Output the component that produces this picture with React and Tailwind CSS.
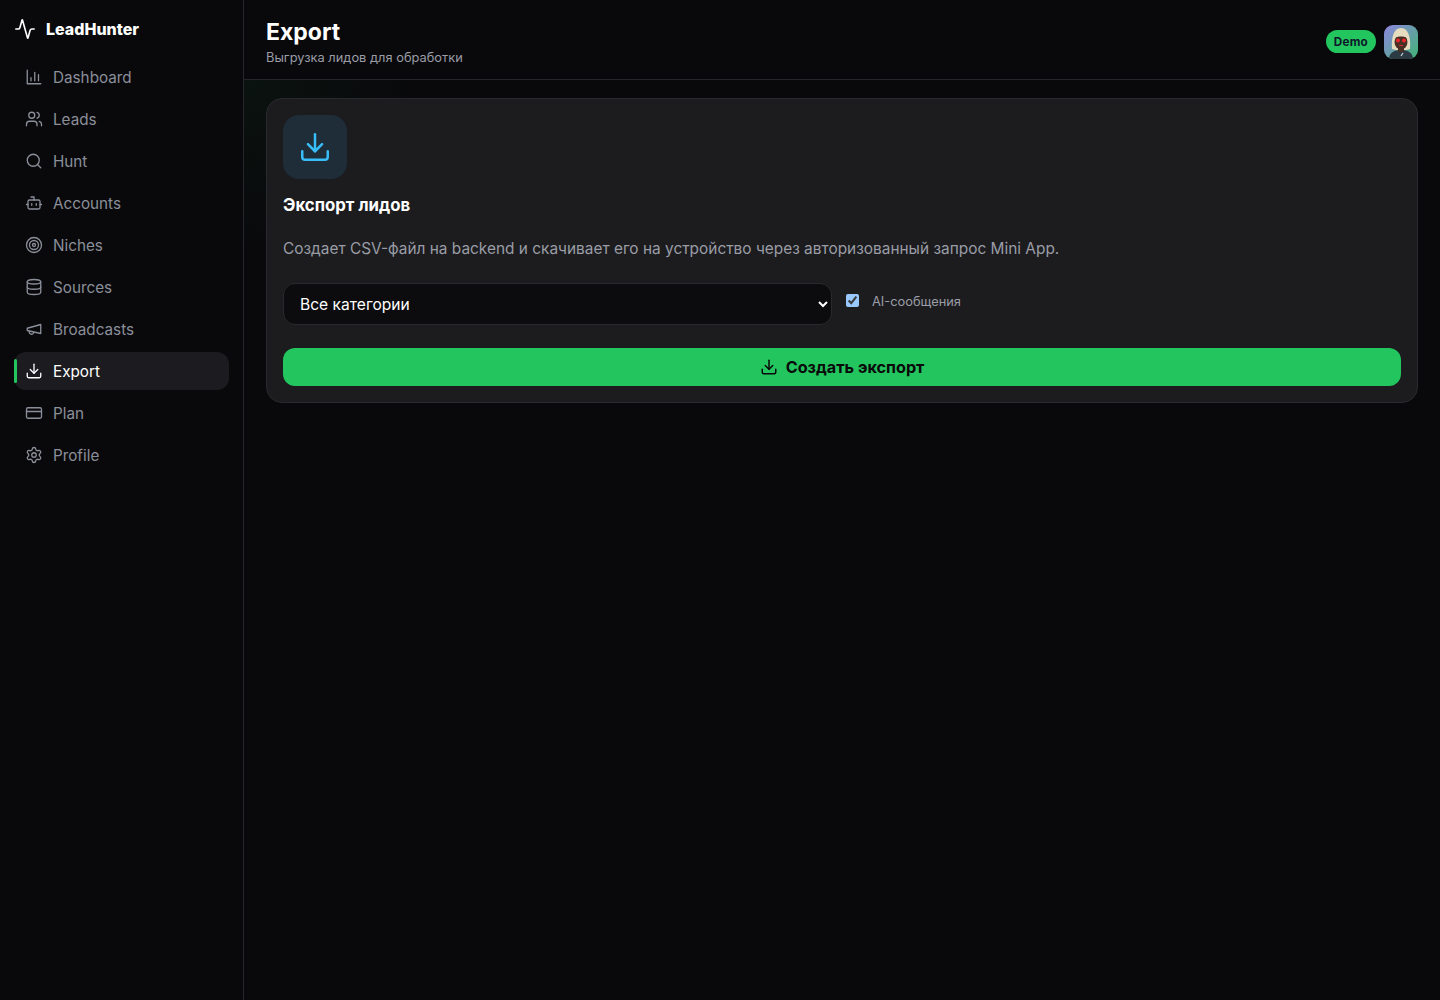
import { Activity, Users, Search, Bot, Target, Database, Download, CreditCard, Settings } from 'lucide-react';

const navItems = [
  { label: 'Dashboard', icon: ChartIcon },
  { label: 'Leads', icon: Users },
  { label: 'Hunt', icon: Search },
  { label: 'Accounts', icon: Bot },
  { label: 'Niches', icon: Target },
  { label: 'Sources', icon: Database },
  { label: 'Broadcasts', icon: MegaphoneIcon },
  { label: 'Export', icon: Download, active: true },
  { label: 'Plan', icon: CreditCard },
  { label: 'Profile', icon: Settings },
];

function ChartIcon({ size, strokeWidth }) {
  return (
    <svg width={size} height={size} viewBox="0 0 24 24" fill="none" stroke="currentColor" strokeWidth={strokeWidth} strokeLinecap="round" strokeLinejoin="round">
      <path d="M3 3v18h18" />
      <path d="M8 17v-4" />
      <path d="M13 17V6" />
      <path d="M18 17V9" />
    </svg>
  );
}

function MegaphoneIcon({ size, strokeWidth }) {
  return (
    <svg width={size} height={size} viewBox="0 0 24 24" fill="none" stroke="currentColor" strokeWidth={strokeWidth} strokeLinecap="round" strokeLinejoin="round">
      <path d="m3 11 18-5v12L3 14v-3z" />
      <path d="M11.6 16.8a3 3 0 1 1-5.8-1.6" />
    </svg>
  );
}

function Avatar() {
  return (
    <svg viewBox="0 0 34 34" className="w-[34px] h-[34px] rounded-[9px]">
      <defs>
        <linearGradient id="avatarBg" x1="0" y1="0" x2="1" y2="1">
          <stop offset="0" stopColor="#8f86e0" />
          <stop offset="1" stopColor="#3fb573" />
        </linearGradient>
      </defs>
      <rect width="34" height="34" fill="url(#avatarBg)" />
      <path d="M5 34c0-6 5-9 12-9s12 3 12 9z" fill="#2c3a44" />
      <path d="M8 24C7 12 10 3 17 3s10 9 9 21l-4 1H12z" fill="#e6dcc0" />
      <ellipse cx="17" cy="17" rx="6.5" ry="7.5" fill="#4a2f24" />
      <rect x="14" y="22" width="6" height="5" fill="#4a2f24" />
      <path d="M10 11c3-3 11-3 14 0v2c-4-2-10-2-14 0z" fill="#e6dcc0" />
      <circle cx="14" cy="15.5" r="1.9" fill="#f0242c" />
      <circle cx="20" cy="15.5" r="1.9" fill="#f0242c" />
      <path d="M15 20.5h4" stroke="#c33" strokeWidth="1.2" />
      <path d="M17 31l2-3" stroke="#cfd6da" strokeWidth="1.2" />
    </svg>
  );
}

export default function App() {
  return (
    <div className="flex min-h-[1000px] bg-[#09090b] text-white font-['Inter',sans-serif]">
      {/* Sidebar */}
      <aside className="w-[244px] shrink-0 border-r border-[#24262a] px-[14px] pt-[18px]">
        <div className="flex items-center gap-[10px] h-[22px]">
          <Activity size={22} strokeWidth={1.75} className="text-white" />
          <span className="text-base font-extrabold leading-none">LeadHunter</span>
        </div>
        <nav className="mt-[18px] w-[215px] flex flex-col gap-1">
          {navItems.map((item) => {
            const Icon = item.icon;
            return (
              <div
                key={item.label}
                className={`relative flex items-center gap-[10px] h-[38px] pl-[11px] rounded-xl text-[15.25px] ${
                  item.active ? 'bg-[#1c1c20] text-white' : 'text-[#8b8f9a]'
                }`}
              >
                {item.active && <span className="absolute left-0 top-[7px] w-[3px] h-6 rounded-sm bg-[#22c55e]" />}
                <Icon size={18} strokeWidth={1.75} />
                <span className="pt-0.5">{item.label}</span>
              </div>
            );
          })}
        </nav>
      </aside>

      {/* Main */}
      <main className="flex-1 min-w-0 flex flex-col">
        <header className="h-[80px] border-b border-[#24262a] pl-[22px] pr-[22px] flex items-center justify-between">
          <div className="pt-[5px]">
            <h1 className="text-[23px] font-bold leading-[28px]">Export</h1>
            <p className="text-[12.85px] text-[#9a9ca6] leading-4 mt-[4px]">Выгрузка лидов для обработки</p>
          </div>
          <div className="flex items-center gap-2 pt-1">
            <span className="h-[23px] px-2 pt-0.5 flex items-center rounded-full bg-[#22c55e] text-[#0f172a] text-[11.7px] font-bold tracking-[0.02em]">Demo</span>
            <Avatar />
          </div>
        </header>

        <div className="flex-1 pt-[18px] px-[22px] bg-[radial-gradient(circle_at_0_0,rgba(34,197,94,0.05),transparent_170px)]">
          <section className="bg-[#1c1c1f] border border-[#2a2a2e] rounded-2xl p-4 [color-scheme:dark]">
            <div className="w-16 h-16 rounded-2xl bg-[#1e2d38] flex items-center justify-center">
              <Download size={34} strokeWidth={1.75} className="text-[#38bdf8]" />
            </div>
            <h2 className="mt-4 text-[16.8px] font-bold leading-5">Экспорт лидов</h2>
            <p className="mt-[22px] text-[15.42px] leading-6 text-[#9a9ca6]">
              Создает CSV-файл на backend и скачивает его на устройство через авторизованный запрос Mini App.
            </p>
            <div className="mt-[22px] flex items-start gap-[14px]">
              <select className="w-[549px] h-[42px] pl-3 pr-0 rounded-xl bg-[#0c0c0e] border border-[#2a2a2e] text-[15.6px] text-white">
                <option>Все категории</option>
              </select>
              <label className="flex items-center gap-[13px] h-[35px] text-[12.85px] text-[#9a9ca6]">
                <input type="checkbox" defaultChecked className="w-[13px] h-[13px]" />
                <span className="pt-0.5">AI-сообщения</span>
              </label>
            </div>
            <button className="mt-[23px] w-full h-[38px] rounded-xl bg-[#22c55e] text-[#0a0a0a] text-[16.2px] font-bold flex items-center justify-center gap-2">
              <Download size={18} strokeWidth={2} />
              Создать экспорт
            </button>
          </section>
        </div>
      </main>
    </div>
  );
}
